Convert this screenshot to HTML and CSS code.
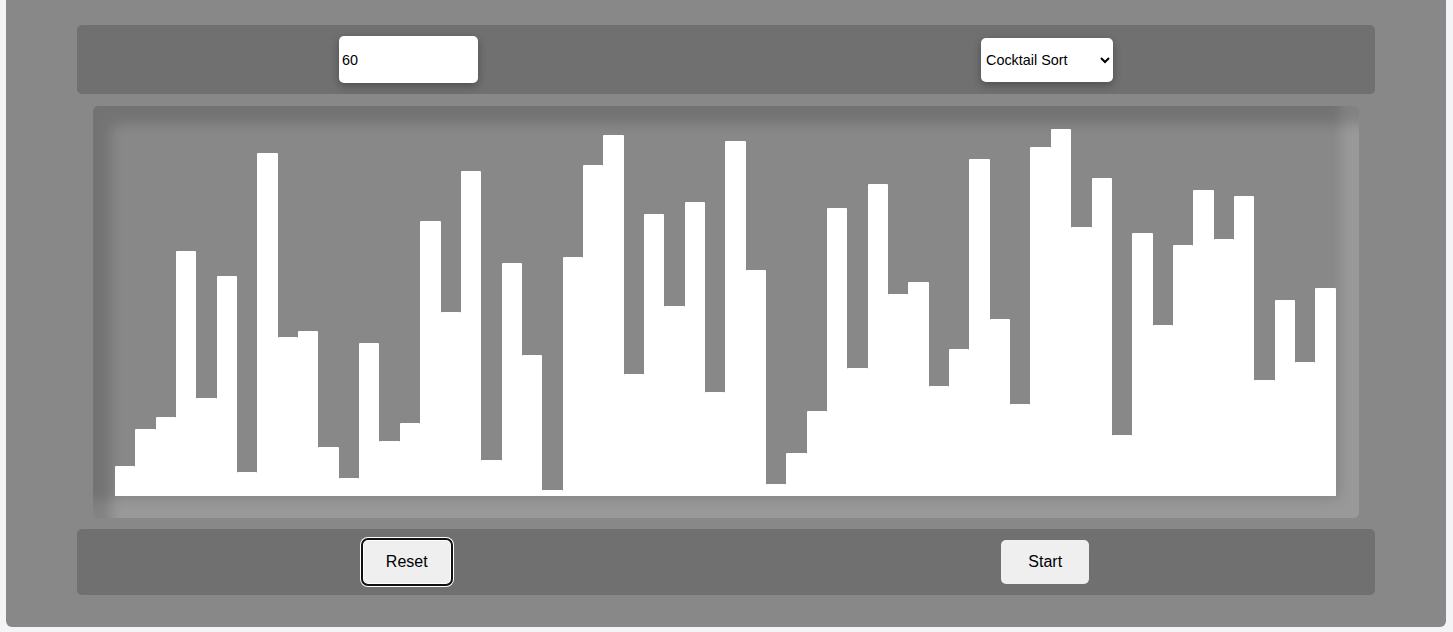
FILE: index.html
```html
<!DOCTYPE html>
<html lang="en">
<head>
<meta charset="utf-8">
<title>Sorting Visualizer</title>
<link rel="stylesheet" href="styles.css">
</head>
<body>
<main class="app">
  <section class="controls controls-top">
    <input class="size-input" type="text" value="60">
    <select class="algo-select">
      <option>Cocktail Sort</option>
      <option>Bubble Sort</option>
      <option>Merge Sort</option>
    </select>
  </section>
  <section class="chart">
    <div class="bar" style="height:30px"></div>
    <div class="bar" style="height:67px"></div>
    <div class="bar" style="height:79px"></div>
    <div class="bar" style="height:245px"></div>
    <div class="bar" style="height:98px"></div>
    <div class="bar" style="height:220px"></div>
    <div class="bar" style="height:24px"></div>
    <div class="bar" style="height:343px"></div>
    <div class="bar" style="height:159px"></div>
    <div class="bar" style="height:165px"></div>
    <div class="bar" style="height:49px"></div>
    <div class="bar" style="height:18px"></div>
    <div class="bar" style="height:153px"></div>
    <div class="bar" style="height:55px"></div>
    <div class="bar" style="height:73px"></div>
    <div class="bar" style="height:275px"></div>
    <div class="bar" style="height:184px"></div>
    <div class="bar" style="height:325px"></div>
    <div class="bar" style="height:36px"></div>
    <div class="bar" style="height:233px"></div>
    <div class="bar" style="height:141px"></div>
    <div class="bar" style="height:6px"></div>
    <div class="bar" style="height:239px"></div>
    <div class="bar" style="height:331px"></div>
    <div class="bar" style="height:361px"></div>
    <div class="bar" style="height:122px"></div>
    <div class="bar" style="height:282px"></div>
    <div class="bar" style="height:190px"></div>
    <div class="bar" style="height:294px"></div>
    <div class="bar" style="height:104px"></div>
    <div class="bar" style="height:355px"></div>
    <div class="bar" style="height:226px"></div>
    <div class="bar" style="height:12px"></div>
    <div class="bar" style="height:43px"></div>
    <div class="bar" style="height:85px"></div>
    <div class="bar" style="height:288px"></div>
    <div class="bar" style="height:128px"></div>
    <div class="bar" style="height:312px"></div>
    <div class="bar" style="height:202px"></div>
    <div class="bar" style="height:214px"></div>
    <div class="bar" style="height:110px"></div>
    <div class="bar" style="height:147px"></div>
    <div class="bar" style="height:337px"></div>
    <div class="bar" style="height:177px"></div>
    <div class="bar" style="height:92px"></div>
    <div class="bar" style="height:349px"></div>
    <div class="bar" style="height:367px"></div>
    <div class="bar" style="height:269px"></div>
    <div class="bar" style="height:318px"></div>
    <div class="bar" style="height:61px"></div>
    <div class="bar" style="height:263px"></div>
    <div class="bar" style="height:171px"></div>
    <div class="bar" style="height:251px"></div>
    <div class="bar" style="height:306px"></div>
    <div class="bar" style="height:257px"></div>
    <div class="bar" style="height:300px"></div>
    <div class="bar" style="height:116px"></div>
    <div class="bar" style="height:196px"></div>
    <div class="bar" style="height:134px"></div>
    <div class="bar" style="height:208px"></div>
  </section>
  <section class="controls controls-bottom">
    <button class="btn btn-focused" type="button">Reset</button>
    <button class="btn" type="button">Start</button>
  </section>
</main>
</body>
</html>
```
FILE: styles.css
```css
html, body {
  margin: 0;
  padding: 0;
  background: #f4f4f6;
  font-family: "Liberation Sans", Arial, sans-serif;
}

.app {
  margin: 0 7px 0 6px;
  height: 627px;
  box-sizing: border-box;
  padding: 25px 71px 32px;
  background: #888888;
  border-radius: 0 0 6px 6px;
}

.controls {
  display: flex;
  justify-content: space-around;
  align-items: center;
  padding: 0 10.5px;
  background: #707070;
  border-radius: 5px;
}

.controls-top {
  height: 69px;
}

.controls-bottom {
  height: 66px;
}

.size-input {
  width: 139px;
  height: 47px;
  box-sizing: border-box;
  border: none;
  border-radius: 5px;
  padding: 0 3px;
  background: #fff;
  color: #000;
  font-family: "Liberation Sans", Arial, sans-serif;
  font-size: 14.4px;
  box-shadow: 0 3px 8px rgba(0, 0, 0, 0.3);
  outline: none;
}

.algo-select {
  width: 132px;
  height: 44px;
  box-sizing: border-box;
  border: none;
  border-radius: 5px;
  padding: 0 0 0 1px;
  background: #fff;
  color: #000;
  font-family: "Liberation Sans", Arial, sans-serif;
  font-size: 14.4px;
  box-shadow: 0 3px 8px rgba(0, 0, 0, 0.3);
}

.chart {
  display: flex;
  align-items: flex-end;
  height: 412px;
  box-sizing: border-box;
  margin: 12px 16px 11px;
  padding: 22px 23px 22px 22px;
  background: #888888;
  border-radius: 5px;
  box-shadow: inset 22px 22px 12px -4px rgba(0, 0, 0, 0.15),
              inset -22px -22px 12px -4px rgba(255, 255, 255, 0.15);
}

.bar {
  flex: 1 1 0;
  background: #ffffff;
  border-radius: 1px 1px 0 0;
}

.btn {
  width: 88px;
  height: 44px;
  box-sizing: border-box;
  border: none;
  border-radius: 5px;
  background: #efefef;
  color: #000;
  font-family: "Liberation Sans", Arial, sans-serif;
  font-size: 16px;
  padding: 0;
}

.btn-focused {
  outline: 2px solid #101010;
  outline-offset: 0;
  box-shadow: 0 0 0 3px #ffffff, inset 0 0 0 1px #ffffff;
}
```
